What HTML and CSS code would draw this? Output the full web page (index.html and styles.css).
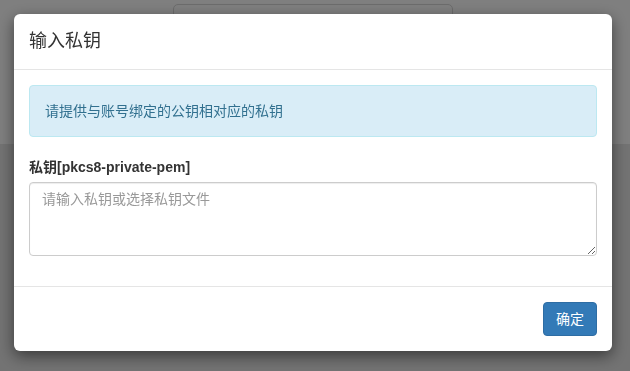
FILE: index.html
```html
<!DOCTYPE html>
<html lang="zh-CN">
<head>
    <meta charset="UTF-8">
    <meta name="viewport" content="width=device-width, initial-scale=1.0">
    <title>输入私钥</title>
    <link rel="stylesheet" href="styles.css">
</head>
<body>
    <div class="page">
        <div class="page-top">
            <div class="search-box"></div>
        </div>
        <div class="page-bottom"></div>
    </div>

    <div class="backdrop"></div>

    <div class="modal">
        <div class="modal-dialog">
            <div class="modal-content">
                <div class="modal-header">
                    <h4 class="modal-title">输入私钥</h4>
                </div>
                <div class="modal-body">
                    <div class="alert">请提供与账号绑定的公钥相对应的私钥</div>
                    <div class="form-group">
                        <label for="privateKey">私钥[pkcs8-private-pem]</label>
                        <textarea id="privateKey" class="form-control" rows="3" placeholder="请输入私钥或选择私钥文件"></textarea>
                    </div>
                </div>
                <div class="modal-footer">
                    <button type="button" class="btn-primary">确定</button>
                </div>
            </div>
        </div>
    </div>
</body>
</html>
```

FILE: styles.css
```css
* {
    margin: 0;
    padding: 0;
    box-sizing: border-box;
}

body {
    font-family: "Helvetica Neue", Helvetica, "Liberation Sans", Arial, "Noto Sans CJK SC", sans-serif;
    font-size: 14px;
    line-height: 20px;
    color: #333;
    background: #fff;
    overflow: hidden;
}

/* page behind the dialog */
.page {
    height: 100vh;
    display: flex;
    flex-direction: column;
}

.page-top {
    height: 144px;
    background: #fff;
    display: flex;
    justify-content: center;
    padding: 4px 0 0 0;
}

.search-box {
    width: 280px;
    height: 60px;
    border: 1px solid #d8d8d8;
    border-radius: 5px;
    margin-right: 4px;
}

.page-bottom {
    flex: 1;
    background: #e6e6e6;
}

.backdrop {
    position: fixed;
    inset: 0;
    background: rgba(0, 0, 0, 0.5);
}

/* dialog */
.modal {
    position: fixed;
    inset: 0;
}

.modal-dialog {
    width: 598px;
    margin: 14px 0 0 14px;
}

.modal-content {
    background: #fff;
    border-radius: 6px;
    box-shadow: 0 5px 15px rgba(0, 0, 0, 0.5);
}

.modal-header {
    padding: 15px;
    border-bottom: 1px solid #e5e5e5;
}

.modal-title {
    font-size: 18px;
    font-weight: normal;
    line-height: 25px;
}

.modal-body {
    padding: 15px;
}

.alert {
    padding: 15px;
    margin-bottom: 20px;
    color: #31708f;
    background: #d9edf7;
    border: 1px solid #bce8f1;
    border-radius: 4px;
}

.form-group {
    margin-bottom: 15px;
}

.form-group label {
    display: block;
    font-weight: bold;
    margin-bottom: 5px;
}

.form-control {
    display: block;
    width: 100%;
    height: 74px;
    padding: 6px 12px;
    font: inherit;
    color: #555;
    border: 1px solid #ccc;
    border-radius: 4px;
    box-shadow: inset 0 1px 1px rgba(0, 0, 0, 0.075);
    resize: vertical;
}

.form-control::placeholder {
    color: #999;
}

.modal-footer {
    padding: 15px;
    border-top: 1px solid #e5e5e5;
    display: flex;
    justify-content: flex-end;
}

.btn-primary {
    font: inherit;
    line-height: 20px;
    padding: 6px 12px;
    color: #fff;
    background: #337ab7;
    border: 1px solid #2e6da4;
    border-radius: 4px;
    cursor: pointer;
}
```
